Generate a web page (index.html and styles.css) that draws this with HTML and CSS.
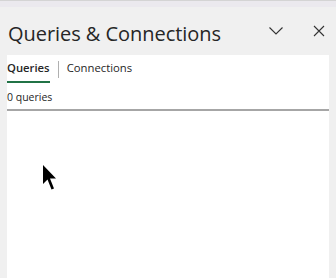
FILE: index.html
```html
<!DOCTYPE html>
<html lang="en">
<head>
    <meta charset="UTF-8">
    <meta name="viewport" content="width=device-width, initial-scale=1.0">
    <title>Queries &amp; Connections</title>
    <link rel="stylesheet" href="styles.css">
</head>
<body>
    <div class="topbar"></div>
    <div class="pane">
        <div class="pane-header">
            <h1 class="pane-title">Queries &amp; Connections</h1>
            <button class="icon-btn" aria-label="Options">
                <svg width="16" height="10" viewBox="0 0 16 10"><path d="M1.5 1.5 L8 8 L14.5 1.5" fill="none" stroke="#333" stroke-width="1.1"/></svg>
            </button>
            <button class="icon-btn" aria-label="Close">
                <svg width="12" height="12" viewBox="0 0 12 12"><path d="M1 1 L11 11 M11 1 L1 11" fill="none" stroke="#333" stroke-width="1.1"/></svg>
            </button>
        </div>
        <div class="content">
            <div class="tabs">
                <div class="tab active">Queries</div>
                <div class="tab-sep"></div>
                <div class="tab">Connections</div>
            </div>
            <div class="count">0 queries</div>
            <div class="list"></div>
            <svg class="cursor" width="16" height="28" viewBox="0 0 16 28">
                <path d="M1 1 L1 20 L5.5 15.5 L9.5 25.5 L12 24.5 L8 14.5 L14 14.5 Z" fill="#000"/>
            </svg>
        </div>
    </div>
</body>
</html>
```

FILE: styles.css
```css
body {
    margin: 0;
    font-family: "Open Sans", "Noto Sans", sans-serif;
    background-color: #f0f0f0;
    width: 336px;
    height: 278px;
    overflow: hidden;
}

.topbar {
    height: 7px;
    background-color: #ebe9ee;
    border-top: 1px solid #d4d4d4;
    box-sizing: border-box;
}

.pane {
    padding: 0 7px 0 7px;
}

.pane-header {
    display: flex;
    align-items: center;
    height: 48px;
}

.pane-title {
    flex: 1;
    margin: 4px 0 0 1px;
    font-size: 20px;
    font-weight: 400;
    color: #262626;
    letter-spacing: -0.05px;
}

.icon-btn {
    border: none;
    background: none;
    padding: 0;
    display: flex;
    align-items: center;
    justify-content: center;
    width: 20px;
    height: 20px;
}

.icon-btn:first-of-type {
    margin-right: 1px;
}

.icon-btn + .icon-btn {
    margin-left: 22px;
    margin-right: 0;
}

.content {
    position: relative;
    background-color: #fff;
    height: 223px;
}

.tabs {
    display: flex;
    align-items: center;
    padding-top: 6px;
    height: 21px;
}

.tab {
    font-size: 11.3px;
    color: #262626;
    padding-bottom: 5px;
    border-bottom: 2px solid transparent;
    line-height: 16px;
}

.tab.active {
    font-weight: 600;
    border-bottom-color: #217346;
}

.tab-sep {
    width: 1px;
    height: 17px;
    background-color: #b0b0b0;
    margin: 0 8px 5px 8px;
}

.count {
    font-size: 10.5px;
    color: #262626;
    margin-top: 8px;
    line-height: 15px;
    padding-bottom: 4px;
    border-bottom: 2px solid #a6a6a6;
}

.cursor {
    position: absolute;
    left: 35px;
    top: 109px;
}
```
